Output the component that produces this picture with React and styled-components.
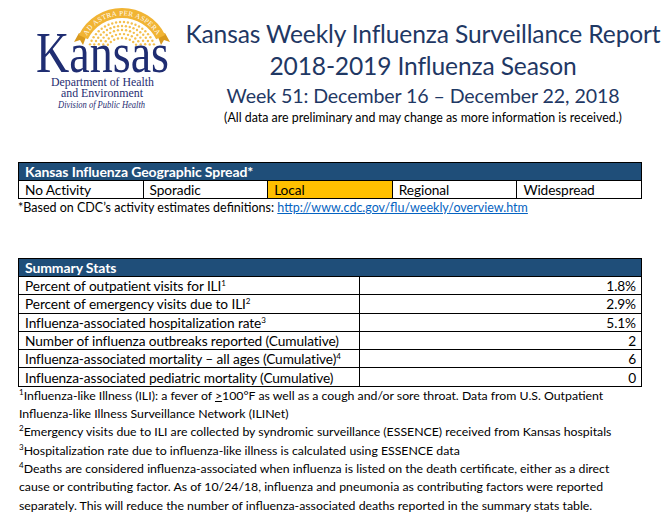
import React from 'react'
import styled, { createGlobalStyle } from 'styled-components'

const GlobalStyle = createGlobalStyle`
    body {
        margin: 0;
        background: #fff;
        font-family: Lato, "Open Sans", sans-serif;
        color: #000;
    }
`

const NAVY = '#1f3864'
const HEAD_BLUE = '#1f4e79'
const GOLD = '#f1b434'
const LOGO_BLUE = '#1f2d72'

const Page = styled.div`
    width: 672px;
    height: 514px;
    overflow: hidden;
`

const Header = styled.div`
    display: flex;
    height: 126px;
`

const LogoBox = styled.div`
    width: 150px;
    padding: 5px 0 0 30px;
`

const TitleBlock = styled.div`
    display: flex;
    flex-direction: column;
    align-items: center;
    width: 486px;
    padding-top: 18px;
    color: ${NAVY};
    white-space: nowrap;
`

const TitleLine = styled.div`
    font-size: ${({ $size }) => $size}px;
    line-height: ${({ $lh }) => $lh}px;
    letter-spacing: ${({ $ls }) => $ls || 0}px;
    color: ${({ $plain }) => ($plain ? '#000' : 'inherit')};
`

const Section = styled.div`
    margin: ${({ $top }) => $top}px 0 0 18px;
    width: 624px;
`

const Grid = styled.div`
    display: grid;
    grid-template-columns: ${({ $cols }) => $cols};
    border-top: 1px solid #000;
    border-left: 1px solid #000;
    font-size: 13.7px;
    letter-spacing: -0.1px;
`

const HeadCell = styled.div`
    grid-column: 1 / -1;
    box-sizing: border-box;
    height: 18px;
    display: flex;
    align-items: center;
    padding: 0 6px;
    background: ${HEAD_BLUE};
    color: #fff;
    font-weight: 700;
    font-size: 14px;
    border-right: 1px solid #000;
    border-bottom: 1px solid #000;
`

const Cell = styled.div`
    box-sizing: border-box;
    height: ${({ $h }) => $h || 18}px;
    display: flex;
    align-items: center;
    justify-content: ${({ $right }) => ($right ? 'flex-end' : 'flex-start')};
    padding: 0 ${({ $right }) => ($right ? 5 : 6)}px 0 6px;
    background: ${({ $fill }) => $fill || '#fff'};
    border-right: 1px solid #000;
    border-bottom: 1px solid #000;
    white-space: nowrap;
`

const Sup = styled.sup`
    font-size: 8px;
    line-height: 0;
    vertical-align: 5px;
`

const Note = styled.div`
    font-size: 12.5px;
    line-height: 18px;
    white-space: nowrap;
`

const Link = styled.a`
    color: #0563c1;
    text-decoration: underline;
`

const Footnotes = styled.div`
    margin-left: 19px;
    font-size: 12.3px;
    line-height: 18.3px;
    white-space: nowrap;
`

const Logo = () => {
    const cx = 122
    const cy = 56
    const dots = []
    ;[34, 30, 26, 22, 18].forEach((r) => {
        const steps = Math.max(3, Math.round((Math.PI * r) / 4))
        for (let i = 0; i <= steps; i++) {
            const a = Math.PI - (Math.PI * i) / steps
            const x = cx + r * Math.cos(a)
            const y = cy - r * Math.sin(a)
            if (y < 46) dots.push([x, y])
        }
    })
    const ang = (26 * Math.PI) / 180
    const arc = (r) =>
        `M ${cx - r * Math.cos(ang)} ${cy - r * Math.sin(ang)} A ${r} ${r} 0 0 1 ${cx + r * Math.cos(ang)} ${cy - r * Math.sin(ang)}`
    return (
        <svg width="145" height="112" viewBox="30 5 145 112">
            <defs>
                <path id="mottoPath" d={arc(40.6)} />
            </defs>
            {dots.map(([x, y], i) => (
                <circle key={i} cx={x} cy={y} r="1.2" fill="#f4c04f" />
            ))}
            <polygon points="79,33 86,37 83,45 80,40 74,42" fill="#d99a1e" />
            <polygon points="165,33 158,37 161,45 164,40 170,42" fill="#d99a1e" />
            <path d={arc(43)} stroke={GOLD} strokeWidth="10" fill="none" />
            <text fontFamily="'Liberation Serif', serif" fontSize="7" fill="#fff" letterSpacing="0.4">
                <textPath href="#mottoPath" startOffset="50%" textAnchor="middle">
                    AD ASTRA PER ASPERA
                </textPath>
            </text>
            <text x="36" y="72" fontFamily="'Liberation Serif', serif" fontSize="58" fill={LOGO_BLUE} textLength="133" lengthAdjust="spacingAndGlyphs">
                Kansas
            </text>
            <text x="51" y="86" fontFamily="'Liberation Serif', serif" fontSize="12.5" fill={LOGO_BLUE} textLength="103" lengthAdjust="spacingAndGlyphs">
                Department of Health
            </text>
            <text x="61" y="97" fontFamily="'Liberation Serif', serif" fontSize="12.5" fill={LOGO_BLUE} textLength="82" lengthAdjust="spacingAndGlyphs">
                and Environment
            </text>
            <text x="58" y="107.5" fontFamily="'Liberation Serif', serif" fontStyle="italic" fontSize="9.5" fill={LOGO_BLUE} textLength="87" lengthAdjust="spacingAndGlyphs">
                Division of Public Health
            </text>
        </svg>
    )
}

const spread = [
    { label: 'No Activity' },
    { label: 'Sporadic' },
    { label: 'Local', fill: '#ffc000' },
    { label: 'Regional' },
    { label: 'Widespread' },
]

const stats = [
    { label: 'Percent of outpatient visits for ILI', sup: '1', value: '1.8%' },
    { label: 'Percent of emergency visits due to ILI', sup: '2', value: '2.9%' },
    { label: 'Influenza-associated hospitalization rate', sup: '3', value: '5.1%' },
    { label: 'Number of influenza outbreaks reported (Cumulative)', value: '2' },
    { label: 'Influenza-associated mortality \u2013 all ages (Cumulative)', sup: '4', value: '6' },
    { label: 'Influenza-associated pediatric mortality (Cumulative)', value: '0' },
]

const App = () => {
    return (
        <Page>
            <GlobalStyle />
            <Header>
                <LogoBox>
                    <Logo />
                </LogoBox>
                <TitleBlock>
                    <TitleLine $size={24.6} $lh={32} $ls={-0.15}>Kansas Weekly Influenza Surveillance Report</TitleLine>
                    <TitleLine $size={24.6} $lh={32} $ls={-0.15}>2018-2019 Influenza Season</TitleLine>
                    <TitleLine $size={19.6} $lh={28} $ls={-0.1}>Week 51: December 16 &ndash; December 22, 2018</TitleLine>
                    <TitleLine $size={12.4} $lh={16} $plain>
                        (All data are preliminary and may change as more information is received.)
                    </TitleLine>
                </TitleBlock>
            </Header>

            <Section $top={36}>
                <Grid $cols="repeat(5, 1fr)">
                    <HeadCell>Kansas Influenza Geographic Spread*</HeadCell>
                    {spread.map((s) => (
                        <Cell key={s.label} $fill={s.fill}>
                            {s.label}
                        </Cell>
                    ))}
                </Grid>
                <Note>
                    *Based on CDC&rsquo;s activity estimates definitions:{' '}
                    <Link href="#">http://www.cdc.gov/flu/weekly/overview.htm</Link>
                </Note>
            </Section>

            <Section $top={41}>
                <Grid $cols="341px 1fr">
                    <HeadCell>Summary Stats</HeadCell>
                    {stats.map((s) => (
                        <React.Fragment key={s.label}>
                            <Cell $h={18.3}>
                                <span>
                                    {s.label}
                                    {s.sup && <Sup>{s.sup}</Sup>}
                                </span>
                            </Cell>
                            <Cell $h={18.3} $right>
                                {s.value}
                            </Cell>
                        </React.Fragment>
                    ))}
                </Grid>
            </Section>

            <Footnotes>
                <div>
                    <Sup>1</Sup>Influenza-like Illness (ILI): a fever of <u>&gt;</u>100&deg;F as well as a cough and/or sore throat. Data from U.S. Outpatient
                </div>
                <div>Influenza-like Illness Surveillance Network (ILINet)</div>
                <div>
                    <Sup>2</Sup>Emergency visits due to ILI are collected by syndromic surveillance (ESSENCE) received from Kansas hospitals
                </div>
                <div>
                    <Sup>3</Sup>Hospitalization rate due to influenza-like illness is calculated using ESSENCE data
                </div>
                <div>
                    <Sup>4</Sup>Deaths are considered influenza-associated when influenza is listed on the death certificate, either as a direct
                </div>
                <div>cause or contributing factor. As of 10/24/18, influenza and pneumonia as contributing factors were reported</div>
                <div>separately. This will reduce the number of influenza-associated deaths reported in the summary stats table.</div>
            </Footnotes>
        </Page>
    )
}

export default App
